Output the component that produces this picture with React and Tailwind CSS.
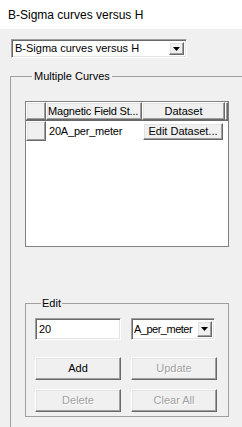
const raised =
  'border border-t-white border-l-white border-r-[#696969] border-b-[#696969] shadow-[inset_-1px_-1px_#a0a0a0,inset_1px_1px_#e3e3e3] bg-[#f0f0f0]'
const sunken =
  'border border-t-[#a0a0a0] border-l-[#a0a0a0] border-r-white border-b-white shadow-[inset_1px_1px_#696969,inset_-1px_-1px_#e3e3e3] bg-white'

function Arrow() {
  return (
    <div className={`${raised} w-[15px] h-full flex items-center justify-center shrink-0`}>
      <svg width="7" height="4" viewBox="0 0 7 4">
        <path d="M0 0h7L3.5 4z" fill="#000" />
      </svg>
    </div>
  )
}

function Button({ children, disabled }) {
  return (
    <div
      className={`${raised} w-[86px] h-[23px] flex items-center justify-center ${
        disabled ? 'text-[#a0a0a0] [text-shadow:1px_1px_#fff]' : 'text-black'
      }`}
    >
      {children}
    </div>
  )
}

export default function App() {
  return (
    <div className="w-[242px] h-[427px] overflow-hidden flex flex-col bg-[#f0f0f0] text-[11px] text-black font-['Liberation_Sans',sans-serif] whitespace-nowrap">
      {/* Title */}
      <div className="h-[29px] bg-white pl-[8px] pt-[6px] text-[12px]">
        B-Sigma curves versus H
      </div>

      {/* Plot selector */}
      <div className={`${sunken} ml-[11px] mt-[10px] w-[176px] h-[19px] flex items-center pl-[3px] pr-[2px] py-[2px]`}>
        <span className="flex-1 leading-none">B-Sigma curves versus H</span>
        <Arrow />
      </div>

      {/* Multiple Curves group */}
      <fieldset className="ml-[10px] mt-[12px] w-[260px] flex-1 border border-[#a0a0a0] border-b-0 pl-[14px] pr-[0px]">
        <legend className="ml-[7px] px-[2px] leading-[13px]">Multiple Curves</legend>

        {/* Grid */}
        <div className="mt-[18px] w-[204px] h-[146px] bg-white border border-[#808080] flex flex-col">
          <div className="flex h-[19px] border-b border-[#696969]">
            <div className={`${raised} w-[20px] h-full`} />
            <div className={`${raised} w-[96px] h-full pl-[1px] flex items-center overflow-hidden tracking-[-0.2px]`}>Magnetic Field St...</div>
            <div className={`${raised} w-[83px] h-full flex items-center justify-center`}>Dataset</div>
            <div className={`${raised} flex-1 h-full`} />
          </div>
          <div className="flex h-[20px]">
            <div className={`${raised} w-[20px] h-full`} />
            <div className="w-[96px] pl-[3px] flex items-center tracking-[-0.2px]">20A_per_meter</div>
            <div className="w-[83px] pt-[2px] pb-[1px] pl-[1px]">
              <div className={`${raised} w-[80px] h-full flex items-center justify-center`}>Edit Dataset...</div>
            </div>
          </div>
        </div>

        {/* Edit group */}
        <fieldset className="mt-[50px] w-[204px] h-[120px] border border-[#a0a0a0] pl-[9px]">
          <legend className="ml-[6px] px-[1px] leading-[13px]">Edit</legend>
          <div className="mt-[8px] flex gap-[10px] h-[22px]">
            <div className={`${sunken} w-[86px] h-full flex items-center pl-[3px]`}>20</div>
            <div className={`${sunken} w-[84px] h-full flex items-center pl-[2px] pr-[2px] py-[2px]`}>
              <span className="flex-1 leading-none overflow-hidden tracking-[-0.5px]">A_per_meter</span>
              <Arrow />
            </div>
          </div>
          <div className="mt-[17px] flex gap-[10px]">
            <Button>Add</Button>
            <Button disabled>Update</Button>
          </div>
          <div className="mt-[9px] flex gap-[10px]">
            <Button disabled>Delete</Button>
            <Button disabled>Clear All</Button>
          </div>
        </fieldset>
      </fieldset>
    </div>
  )
}
